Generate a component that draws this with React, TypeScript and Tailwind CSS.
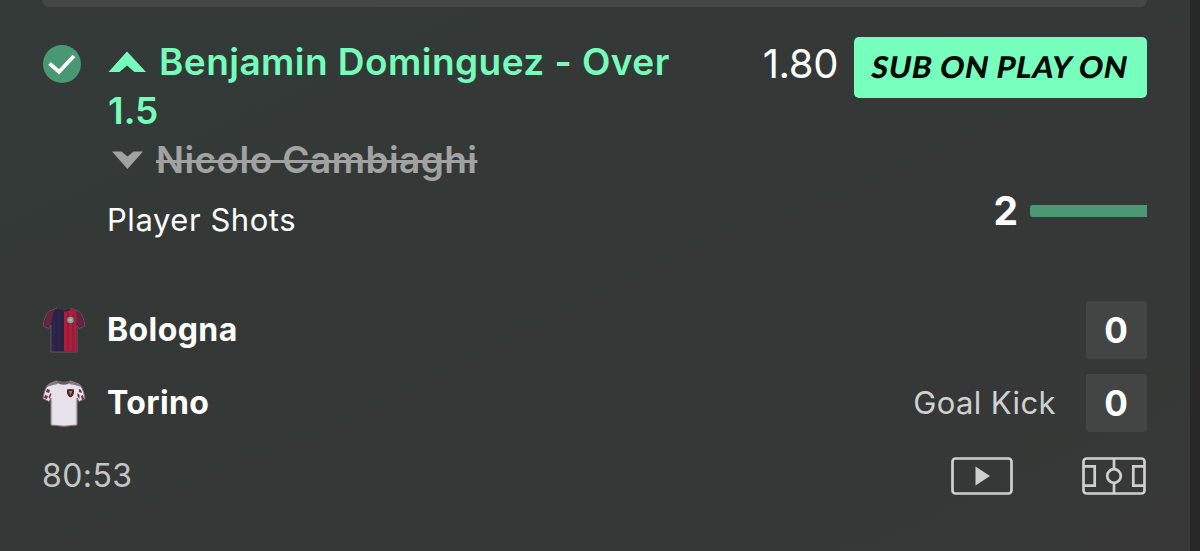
import type { ReactNode } from "react";

interface TeamRowProps {
  name: string;
  score: number;
  status?: string;
  children: ReactNode;
}

function CheckBadge() {
  return (
    <svg width="38" height="38" viewBox="0 0 38 38" fill="none">
      <circle cx="19" cy="19" r="19" fill="#499873" />
      <path d="M6.5 18.5 L16 26.8 L31 11" stroke="#fff" strokeWidth="3.8" />
    </svg>
  );
}

function HomeShirt() {
  return (
    <svg width="44" height="48" viewBox="0 0 44 48">
      <path d="M14 2.5 L7 5.5 Q3 8 1 20 L7 22.5 L9 19 V46 H35 V19 L37 22.5 L43 20 Q41 8 37 5.5 L29 2.5 Q22 5 14 2.5Z" fill="#262347" stroke="#705061" strokeWidth="1" />
      <path d="M22 4.5 Q26 4.5 29 3 L36.5 6 L34.5 18 V45.5 H22Z" fill="#ad1d3c" />
      <path d="M13 3.5 L7.5 6 Q3.5 9 1.7 19.6 L6.7 21.6 L9 17 L11.5 7Z M34 5.3 L36.5 6.2 Q40.5 9 42.3 19.6 L37.3 21.6 L34.8 17Z" fill="#652440" />
      <path d="M17 6 V45 M12 10 V45" stroke="#39294c" strokeWidth="1" />
      <path d="M26 6 V45 M31 8 V45" stroke="#851b38" strokeWidth="1" />
      <path d="M15 3 Q22 6 28 3" stroke="#302438" strokeWidth="2" fill="none" />
      <circle cx="28.5" cy="14" r="3.2" fill="#76a994" />
      <circle cx="28.5" cy="14" r="1.3" fill="#a5c8b8" />
    </svg>
  );
}

function AwayShirt() {
  return (
    <svg width="44" height="48" viewBox="0 0 44 48">
      <path d="M14 2 L7 5 Q3 8 1 19.5 L7 22.5 L9 19 V46 Q22 48.5 35 46 V19 L37 22.5 L43 19.5 Q41 8 37 5 L29 2 Q22 5 14 2Z" fill="#e6e2ea" stroke="#8b747e" strokeWidth="1" />
      <path d="M14 2 L7 5 L4.5 8 L11 6 L16 5Z M29 2 L37 5 L39.5 8 L33 6 L27 5Z" fill="#87767f" />
      <path d="M15 2.5 Q22 6.5 28 2.5" stroke="#676066" strokeWidth="2.4" fill="none" />
      <path d="M5 10 l3 1 l-1 3 l-3 -1z M3 16 l3 1 l-1 3 l-3 -1z M8.5 14 l1 1 l-2 5 l-1 -2z M37 10 l2 1 l1 3 l-3 -1z M39 17 l2 -1 l1 4 l-2 1z M35.5 14 l2 2 l0 4 l-2 -3z" fill="#722b40" />
      <path d="M9.5 19 V45 M34.5 19 V45" stroke="#b5a5b0" strokeWidth="1.2" />
      <path d="M25 10.5 Q28.5 9.5 32 10.5 V14 Q31.5 17 28.5 18.5 Q25.5 17 25 14Z" fill="#4c2427" />
      <path d="M26.8 12 H30.3 L28.5 16.5Z" fill="#c38037" />
    </svg>
  );
}

function StreamIcon() {
  return (
    <svg width="62" height="38" viewBox="0 0 62 38">
      <rect x="1.5" y="1.5" width="59" height="35" rx="3" fill="none" stroke="#cecfce" strokeWidth="2.7" />
      <path d="M24.5 9.5 L39 19 L24.5 28.5Z" fill="#cecfce" />
    </svg>
  );
}

function PitchIcon() {
  return (
    <svg width="64" height="38" viewBox="0 0 64 38" fill="none" stroke="#cecfce" strokeWidth="2.7">
      <rect x="1.5" y="1.5" width="61" height="35" rx="3" />
      <path d="M2 9.3 H12.7 V28.7 H2 M62 9.3 H51.3 V28.7 H62 M32 2 V12 M32 26 V36" />
      <circle cx="32" cy="19" r="6.8" />
    </svg>
  );
}

function TeamRow({ name, score, status, children }: TeamRowProps) {
  return (
    <div className="flex h-[58px] items-center">
      <div className="w-[65px] shrink-0">{children}</div>
      <span className="text-[32px] font-bold tracking-[0.4px] text-white">{name}</span>
      <span className="mr-[30px] ml-auto text-[31px] font-normal tracking-[0.4px] text-[#cfd1d0]">{status}</span>
      <div className="flex h-[58px] w-[61px] items-center justify-center rounded-[3px] bg-[#434544] pr-px text-[35px] font-bold text-white">
        {score}
      </div>
    </div>
  );
}

export default function App() {
  return (
    <div className="flex h-[551px] w-[1200px] overflow-hidden bg-[#282828] font-['Inter',sans-serif] whitespace-nowrap">
      <div className="flex w-[1190px] flex-col bg-linear-to-br from-[#333a37] via-[#343836] to-[#373837] pr-[43px] pl-[42px]">
        <div className="h-[7px] w-full rounded-b-[8px] bg-[#434745]" />

        {/* Selection */}
        <div className="mt-[30px] flex h-[264px] items-start">
          <div className="mt-2 w-[66px] shrink-0 pl-px">
            <CheckBadge />
          </div>
          <div className="flex flex-col text-[37px] leading-[49px] font-semibold">
            <div className="flex items-center text-[#75fdbb]">
              <svg width="38" height="22" viewBox="0 0 38 22" className="mr-[13px]">
                <path d="M0.5 21 L19 0.5 L38 21 H26.5 L19 14.5 L11.5 21Z" fill="#75fdbb" />
              </svg>
              <span className="tracking-[0.45px]">Benjamin Dominguez - Over</span>
            </div>
            <span className="text-[#75fdbb]">1.5</span>
            <div className="flex items-center text-[#a1a3a2]">
              <svg width="31" height="18" viewBox="0 0 31 18" className="mr-[13px] ml-1">
                <path d="M0 0.5 H9.5 L15.5 5.5 L21.5 0.5 H31 L15.5 18Z" fill="#a1a3a2" />
              </svg>
              <span className="tracking-[0.42px] line-through decoration-[3px]">Nicolo Cambiaghi</span>
            </div>
            <span className="-ml-px mt-[11px] text-[31px] font-normal tracking-[0.55px] text-white">Player Shots</span>
          </div>
          <div className="ml-auto flex flex-col items-end">
            <div className="flex items-start">
              <span className="mr-4 text-[40px] leading-[54px] font-normal tracking-[-0.4px] text-white">1.80</span>
              <div className="flex h-[61px] w-[293px] items-center justify-center rounded-[5px] bg-[#77ffbd] pb-0.5 font-['Lato',sans-serif] text-[30px] font-black text-[#030a05]">
                <span className="-skew-x-10 tracking-[0.65px]">SUB ON PLAY ON</span>
              </div>
            </div>
            <div className="mt-[88px] flex items-center">
              <span className="mr-3 text-[39px] leading-[50px] font-bold text-white">2</span>
              <div className="h-3 w-[117px] rounded-l-[3px] bg-[#4a9974]" />
            </div>
          </div>
        </div>

        {/* Match */}
        <div className="flex flex-col gap-[15px]">
          <TeamRow name="Bologna" score={0}>
            <HomeShirt />
          </TeamRow>
          <TeamRow name="Torino" score={0} status="Goal Kick">
            <AwayShirt />
          </TeamRow>
        </div>

        <div className="mt-[25px] flex h-[38px] items-center">
          <span className="text-[32px] font-normal tracking-[0.4px] text-[#c4c6c5]">80:53</span>
          <div className="mr-px ml-auto flex gap-[69px]">
            <StreamIcon />
            <PitchIcon />
          </div>
        </div>
      </div>
    </div>
  );
}
